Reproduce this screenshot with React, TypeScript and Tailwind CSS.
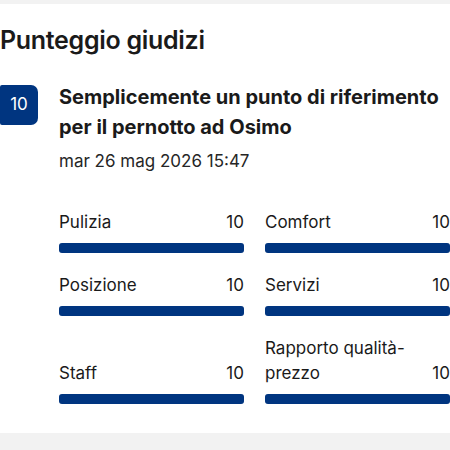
import React from 'react';

interface Score {
  label: string;
  value: number;
}

const scores: Score[] = [
  { label: 'Pulizia', value: 10 },
  { label: 'Comfort', value: 10 },
  { label: 'Posizione', value: 10 },
  { label: 'Servizi', value: 10 },
  { label: 'Staff', value: 10 },
  { label: 'Rapporto qualità-prezzo', value: 10 },
];

const ScoreBar: React.FC<Score> = ({ label, value }) => (
  <div className="flex flex-col justify-end">
    <div className="flex items-end justify-between gap-3 text-[17px] leading-[25px] text-[#1a1a1a]">
      <span>{label}</span>
      <span>{value}</span>
    </div>
    <div className="mt-2 h-[10px] w-full rounded-[3px] bg-[#eaeaea]">
      {/* bar width taken from the score */}
      <div className="h-full rounded-[3px] bg-[#003580]" style={{ width: `${value * 10}%` }}></div>
    </div>
  </div>
);

export default function App() {
  return (
    <div className="w-[450px] h-[450px] overflow-hidden bg-[#f2f2f2] font-['Inter','Liberation_Sans',sans-serif]">
      <div className="mt-1 h-[429px] bg-white">
        <h2 className="pt-[21px] text-[25px] leading-[30px] font-semibold text-[#1a1a1a] tracking-[-0.3px]">
          Punteggio giudizi
        </h2>

        <div className="mt-[27px] flex">
          <div className="mt-[3px] w-[38px] h-[40px] shrink-0 rounded-r-[7px] rounded-l-[2px] bg-[#003580] flex items-center justify-center text-white text-[17px]">
            10
          </div>
          <div className="ml-[21px] flex-1">
            <h3 className="text-[20px] leading-[30px] font-bold text-[#1a1a1a]">
              Semplicemente un punto di riferimento per il pernotto ad Osimo
            </h3>
            <p className="mt-[7px] text-[17px] leading-[24px] text-[#262626]">mar 26 mag 2026 15:47</p>
          </div>
        </div>

        <div className="ml-[59px] mt-[37px] grid grid-cols-[185px_185px] gap-x-[21px] gap-y-[20px]">
          {scores.map((s) => (
            <ScoreBar key={s.label} label={s.label} value={s.value} />
          ))}
        </div>
      </div>
    </div>
  );
}
